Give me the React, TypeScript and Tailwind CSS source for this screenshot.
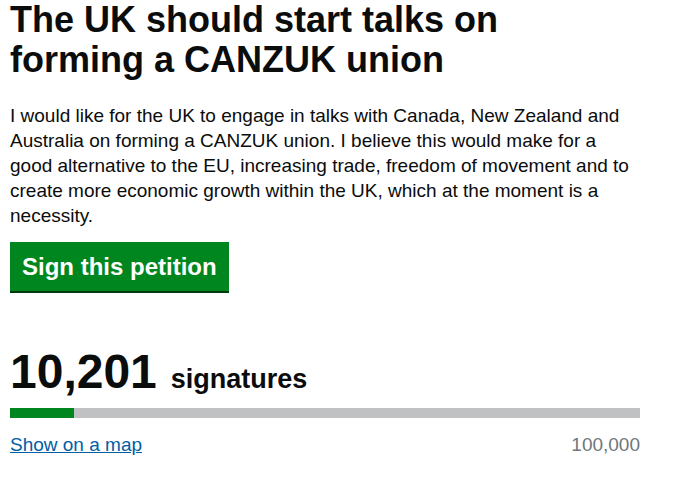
const SIGNATURES = 10201;
const THRESHOLD = 100000;

export default function App() {
  const pct = Math.min(100, (SIGNATURES / THRESHOLD) * 100);

  return (
    <main className="bg-white min-h-screen pl-[10px] text-[#0b0c0c] font-['Liberation_Sans',Arial,sans-serif]">
      <div className="w-[630px]">
        <h1 className="text-[36px] leading-[40px] font-bold">
          The UK should start talks on
          <br />
          forming a CANZUK union
        </h1>

        <p className="mt-[23px] text-[19px] leading-[25px]">
          I would like for the UK to engage in talks with Canada, New Zealand and
          Australia on forming a CANZUK union. I believe this would make for a
          good alternative to the EU, increasing trade, freedom of movement and to
          create more economic growth within the UK, which at the moment is a
          necessity.
        </p>

        <button className="mt-[14px] bg-[#00861f] text-white font-bold text-[24px] leading-[49px] px-[12px] shadow-[0_2px_0_#00390f]">
          Sign this petition
        </button>

        <div className="mt-[55px] flex items-baseline">
          <span className="text-[48px] leading-[52px] font-bold">10,201</span>
          <span className="ml-[14px] text-[27px] font-bold">signatures</span>
        </div>

        <div className="mt-[8px] h-[10px] bg-[#bfc1c3]">
          <div className="h-full bg-[#00861f]" style={{ width: `${pct}%` }} />
        </div>

        <div className="mt-[14px] flex justify-between text-[19px] leading-[25px]">
          <a href="#" className="text-[#005ea5] underline">
            Show on a map
          </a>
          <span className="text-[#6f777b]">100,000</span>
        </div>
      </div>
    </main>
  );
}
